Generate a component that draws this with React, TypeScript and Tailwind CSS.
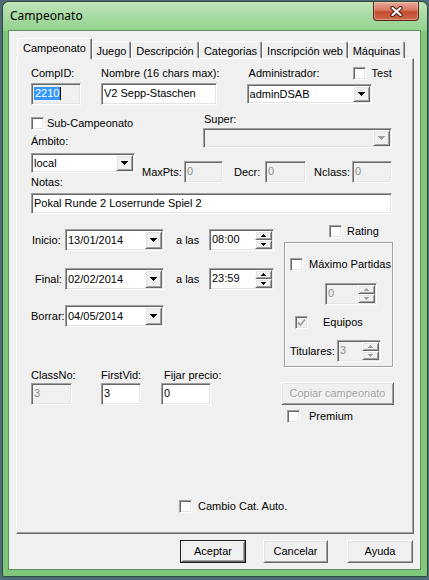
import React from "react";

const sunken =
  "border border-t-[#a0a0a0] border-l-[#a0a0a0] border-r-white border-b-white shadow-[inset_1px_1px_0_#696969,inset_-1px_-1px_0_#e3e3e3]";
const raised =
  "border border-t-white border-l-white border-r-[#696969] border-b-[#696969] shadow-[inset_1px_1px_0_#e3e3e3,inset_-1px_-1px_0_#a0a0a0] bg-[#f0f0f0]";

function Arrow({ off }: { off?: boolean }) {
  return (
    <svg width="7" height="4" viewBox="0 0 7 4" shapeRendering="crispEdges">
      <path d="M0 0H7V1H6V2H5V3H4V4H3V3H2V2H1V1H0Z" fill={off ? "#a0a0a0" : "#000"} />
    </svg>
  );
}

function Tiny({ up, off }: { up?: boolean; off?: boolean }) {
  const d = up ? "M2 0H3V1H4V2H5V3H0V2H1V1H2Z" : "M0 0H5V1H4V2H3V3H2V2H1V1H0Z";
  return (
    <svg width="5" height="3" viewBox="0 0 5 3" shapeRendering="crispEdges">
      <path d={d} fill={off ? "#a0a0a0" : "#000"} />
    </svg>
  );
}

function Field({ className, children, off }: { className: string; children?: React.ReactNode; off?: boolean }) {
  return (
    <div
      className={`${sunken} ${off ? "bg-[#f0f0f0] text-[#8e8e8e]" : "bg-white text-black"} flex items-center pl-[2px] pb-[1px] whitespace-nowrap overflow-hidden ${className}`}
    >
      {children}
    </div>
  );
}

function Combo({ className, value, off }: { className: string; value?: string; off?: boolean }) {
  return (
    <div className={`${sunken} ${off ? "bg-[#f0f0f0]" : "bg-white"} flex items-stretch ${className}`}>
      <span className="flex-1 flex items-center pl-[2px] whitespace-nowrap overflow-hidden">{value}</span>
      <span className={`${raised} w-[17px] my-[1px] mr-[1px] flex items-center justify-center`}>
        <Arrow off={off} />
      </span>
    </div>
  );
}

function Spin({ className, value, off }: { className: string; value: string; off?: boolean }) {
  return (
    <div className={`${sunken} ${off ? "bg-[#f0f0f0] text-[#8e8e8e]" : "bg-white"} flex items-stretch ${className}`}>
      <span className="flex-1 flex items-center pl-[2px] pb-[1px]">{value}</span>
      <span className="flex flex-col w-[17px] my-[1px] mr-[1px]">
        <span className={`${raised} flex-1 flex items-center justify-center`}>
          <Tiny up off={off} />
        </span>
        <span className={`${raised} flex-1 flex items-center justify-center`}>
          <Tiny off={off} />
        </span>
      </span>
    </div>
  );
}

function Check({
  label,
  checked,
  off,
  gap,
  className = "",
}: {
  label: string;
  checked?: boolean;
  off?: boolean;
  gap: string;
  className?: string;
}) {
  return (
    <div className={`flex items-center whitespace-nowrap ${className}`}>
      <span
        className={`${sunken} ${off ? "bg-[#f0f0f0]" : "bg-white"} w-[13px] h-[13px] shrink-0 flex items-center justify-center`}
      >
        {checked && (
          <svg width="9" height="9" viewBox="0 0 9 9">
            <path d="M1 4.5L3.5 7L8 1.5" stroke={off ? "#a0a0a0" : "#000"} strokeWidth="1.8" fill="none" />
          </svg>
        )}
      </span>
      <span className={gap}>{label}</span>
    </div>
  );
}

function Btn({ children, def, off, className }: { children: string; def?: boolean; off?: boolean; className: string }) {
  const face = (
    <div
      className={`${raised} w-full h-full flex items-center justify-center ${off ? "text-[#a0a0a0] [text-shadow:1px_1px_0_#fff]" : ""}`}
    >
      {children}
    </div>
  );
  return def ? <div className={`border border-[#1a1a1a] ${className}`}>{face}</div> : <div className={className}>{face}</div>;
}

const tabs = [
  { label: "Campeonato", w: "w-[75px]", active: true },
  { label: "Juego", w: "w-[39px]" },
  { label: "Descripción", w: "w-[68px]" },
  { label: "Categorias", w: "w-[63px]" },
  { label: "Inscripción web", w: "w-[86px]" },
  { label: "Máquinas", w: "w-[57px]" },
];

export default function App() {
  return (
    <div className="w-[429px] h-[580px] overflow-hidden bg-[#4e6b7a] font-['Liberation_Sans',Arial,sans-serif] text-[11px] leading-[13px] text-black">
      <div className="ml-[2px] mt-[1px] w-[426px] h-[576px] rounded-t-[7px] rounded-b-[2px] border border-[#2f4a33] bg-[#80c77c] flex flex-col">
        {/* title bar */}
        <div className="h-[29px] flex items-start justify-between rounded-t-[6px] bg-[linear-gradient(180deg,#bfe5b9_0%,#a5d9a0_55%,#93d18e_100%)]">
          <span className="ml-[7px] mt-[6px] font-['Noto_Sans',sans-serif] text-[12px] leading-[15px] text-black">
            Campeonato
          </span>
          <div className="mr-[8px] w-[46px] h-[19px] rounded-b-[4px] border border-t-0 border-[#5a2418] bg-[linear-gradient(180deg,#e9a999_0%,#d7775f_45%,#c24b2f_55%,#cf6a4c_100%)] shadow-[inset_0_0_0_1px_rgba(255,255,255,0.3)] flex items-center justify-center">
            <svg width="13" height="11" viewBox="0 0 13 11">
              <path d="M2.5 2L10.5 9M10.5 2L2.5 9" stroke="#4b1d12" strokeWidth="4.2" strokeLinecap="round" />
              <path d="M2.5 2L10.5 9M10.5 2L2.5 9" stroke="#fff" strokeWidth="2.2" strokeLinecap="round" />
            </svg>
          </div>
        </div>

        {/* client area */}
        <div className="ml-[6px] w-[411px] h-[538px] bg-[#f0f0f0] shadow-[0_0_0_1px_#5f8f5c] flex flex-col">
          {/* tab strip */}
          <div className="mt-[7px] ml-[8px] h-[20px] flex items-end">
            {tabs.map((t) =>
              t.active ? (
                <div
                  key={t.label}
                  className={`${t.w} relative z-10 h-[21px] -mb-[1px] bg-[#f0f0f0] rounded-t-[2px] border-t border-l border-t-white border-l-white border-r border-r-[#696969] shadow-[inset_-1px_0_0_#a0a0a0] flex justify-center pt-[3px]`}
                >
                  {t.label}
                </div>
              ) : (
                <div
                  key={t.label}
                  className={`${t.w} h-[17px] bg-[#f0f0f0] rounded-t-[2px] border-t border-l border-t-white border-l-white border-r border-r-[#696969] shadow-[inset_-1px_0_0_#a0a0a0] flex justify-center pt-[3px] whitespace-nowrap`}
                >
                  {t.label}
                </div>
              )
            )}
          </div>

          {/* tab panel */}
          <div className="ml-[7px] w-[398px] h-[476px] border border-t-white border-l-white border-r-[#696969] border-b-[#696969] shadow-[inset_-1px_-1px_0_#a0a0a0] flex flex-col">
            {/* row A */}
            <div className="mt-[8px] ml-[14px] flex items-start">
              <div className="w-[50px] flex flex-col">
                <span>CompID:</span>
                <Field className="mt-[3px] w-[50px] h-[22px]" off>
                  <span className="bg-[#3399ff] text-white px-[1px]">2210</span>
                  <span className="w-[1px] h-[13px] bg-black" />
                </Field>
              </div>
              <div className="ml-[20px] flex flex-col">
                <span>Nombre (16 chars max):</span>
                <Field className="mt-[3px] w-[116px] h-[22px]">V2 Sepp-Staschen</Field>
              </div>
              <div className="ml-[27px] flex flex-col">
                <div className="flex items-center h-[13px]">
                  <span className="w-[106px] shrink-0 pl-[2px]">Administrador:</span>
                  <Check label="Test" gap="ml-[6px]" />
                </div>
                <Combo className="mt-[4px] w-[125px] h-[20px]" value="adminDSAB" />
              </div>
            </div>

            {/* row B */}
            <div className="mt-[8px] ml-[14px] flex items-start">
              <div className="w-[104px] flex flex-col">
                <Check label="Sub-Campeonato" gap="ml-[3px]" className="mt-[4px]" />
                <span className="mt-[5px]">Ámbito:</span>
                <Combo className="mt-[5px] w-[104px] h-[20px]" value="local" />
                <span className="mt-[3px]">Notas:</span>
              </div>
              <div className="ml-[7px] flex flex-col">
                <span className="ml-[62px]">Super:</span>
                <Combo className="ml-[61px] mt-[2px] w-[189px] h-[20px]" off />
                <div className="mt-[13px] flex items-center">
                  <span className="w-[42px]">MaxPts:</span>
                  <Field className="w-[39px] h-[22px]" off>
                    0
                  </Field>
                  <span className="ml-[11px] w-[31px]">Decr:</span>
                  <Field className="w-[41px] h-[22px]" off>
                    0
                  </Field>
                  <span className="ml-[8px] w-[38px]">Nclass:</span>
                  <Field className="w-[40px] h-[22px]" off>
                    0
                  </Field>
                </div>
              </div>
            </div>

            <Field className="mt-[4px] ml-[14px] w-[361px] h-[21px]">Pokal Runde 2 Loserrunde Spiel 2</Field>

            {/* dates region */}
            <div className="mt-[11px] ml-[14px] flex items-start">
              <div className="w-[243px] flex flex-col">
                <div className="mt-[4px] flex items-center">
                  <span className="w-[34px] pl-[1px]">Inicio:</span>
                  <Combo className="w-[99px] h-[22px]" value="13/01/2014" />
                  <span className="ml-[12px] w-[33px]">a las</span>
                  <Spin className="w-[65px] h-[22px]" value="08:00" />
                </div>
                <div className="mt-[17px] flex items-center">
                  <span className="w-[34px] pl-[4px]">Final:</span>
                  <Combo className="w-[99px] h-[22px]" value="02/02/2014" />
                  <span className="ml-[12px] w-[33px]">a las</span>
                  <Spin className="w-[65px] h-[22px]" value="23:59" />
                </div>
                <div className="mt-[15px] flex items-center">
                  <span className="w-[34px]">Borrar:</span>
                  <Combo className="w-[99px] h-[22px]" value="04/05/2014" />
                </div>
              </div>
              <div className="ml-[10px] w-[109px] flex flex-col">
                <Check label="Rating" gap="ml-[5px]" className="ml-[45px]" />
                <div className="mt-[4px] h-[125px] border border-[#a0a0a0] shadow-[inset_1px_1px_0_#fff,1px_1px_0_#fff] flex flex-col">
                  <Check label="Máximo Partidas" gap="ml-[6px]" className="mt-[15px] ml-[5px]" />
                  <Spin className="mt-[12px] ml-[40px] w-[52px] h-[22px]" value="0" off />
                  <Check label="Equipos" gap="ml-[15px]" className="mt-[11px] ml-[10px]" checked off />
                  <div className="mt-[11px] ml-[5px] flex items-center">
                    <span className="w-[47px]">Titulares:</span>
                    <Spin className="w-[44px] h-[22px]" value="3" off />
                  </div>
                </div>
              </div>
            </div>

            {/* row E */}
            <div className="mt-[2px] ml-[14px] flex items-start">
              <div className="w-[41px] flex flex-col">
                <span>ClassNo:</span>
                <Field className="mt-[1px] w-[41px] h-[22px]" off>
                  3
                </Field>
              </div>
              <div className="ml-[29px] w-[40px] flex flex-col">
                <span>FirstVid:</span>
                <Field className="mt-[1px] w-[40px] h-[22px]">3</Field>
              </div>
              <div className="ml-[20px] w-[50px] flex flex-col">
                <span className="pl-[3px] whitespace-nowrap">Fijar precio:</span>
                <Field className="mt-[1px] w-[50px] h-[22px]">0</Field>
              </div>
              <div className="ml-[70px] flex flex-col">
                <Btn className="mt-[13px] w-[113px] h-[23px]" off>
                  Copiar campeonato
                </Btn>
                <Check label="Premium" gap="ml-[9px]" className="mt-[5px] ml-[6px]" />
              </div>
            </div>

            <Check label="Cambio Cat. Auto." gap="ml-[6px]" className="mt-[77px] ml-[162px]" />
          </div>

          {/* buttons */}
          <div className="mt-[6px] ml-[171px] flex items-start">
            <Btn className="w-[66px] h-[23px]" def>
              Aceptar
            </Btn>
            <Btn className="ml-[17px] w-[65px] h-[23px]">Cancelar</Btn>
            <Btn className="ml-[19px] w-[66px] h-[23px]">Ayuda</Btn>
          </div>
        </div>
      </div>
    </div>
  );
}
